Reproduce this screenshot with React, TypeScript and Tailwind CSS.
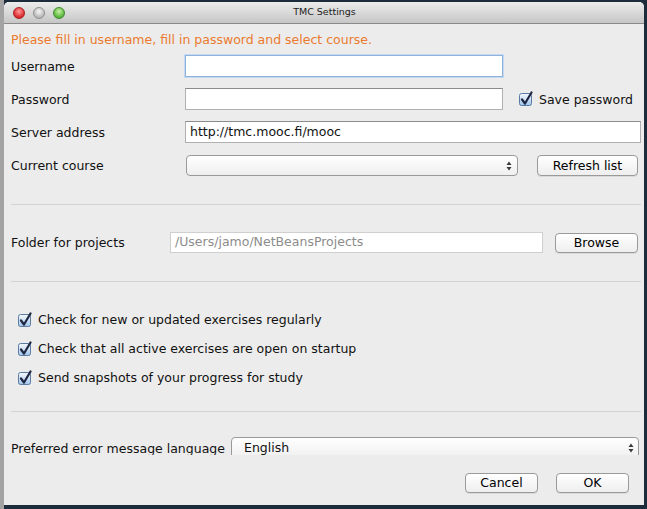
import React from "react";

function AquaCheck() {
  return (
    <svg width="16" height="16" viewBox="0 0 16 16" className="shrink-0">
      <defs>
        <linearGradient id="cbg" x1="0" y1="0" x2="0" y2="1">
          <stop offset="0" stopColor="#f4f8fd" />
          <stop offset="0.5" stopColor="#cfe1f5" />
          <stop offset="1" stopColor="#9fc3ea" />
        </linearGradient>
      </defs>
      <rect x="1.5" y="2.5" width="12" height="12" rx="2" fill="url(#cbg)" stroke="#5b7ba3" />
      <path d="M4 8.5 L7 12.5 L13.5 1.5" fill="none" stroke="#1d2742" strokeWidth="2.2" strokeLinecap="round" strokeLinejoin="round" />
    </svg>
  );
}

function UpDown() {
  return (
    <svg width="6" height="10" viewBox="0 0 6 10" className="shrink-0">
      <path d="M3 0.5 L5.5 4 L0.5 4 Z" fill="#3a3a3a" />
      <path d="M3 9.5 L5.5 6 L0.5 6 Z" fill="#3a3a3a" />
    </svg>
  );
}

function MacButton({ label, className }: { label: string; className: string }) {
  return (
    <div
      className={
        "flex items-center justify-center rounded-[4px] border border-[#9a9a9a] bg-gradient-to-b from-white to-[#eeeeee] text-black shadow-[0_1px_0_rgba(0,0,0,0.08)] " +
        className
      }
    >
      {label}
    </div>
  );
}

function CheckRow({ text }: { text: string }) {
  return (
    <div className="flex items-center h-[16px]">
      <div className="ml-[6px] mr-[5px]">
        <AquaCheck />
      </div>
      <span className="mt-[1px]">{text}</span>
    </div>
  );
}

function Separator({ className }: { className: string }) {
  return <div className={"h-px w-[630px] bg-[#d3d3d3] " + className} />;
}

export default function App() {
  return (
    <div className="w-[647px] h-[509px] bg-[#1d2c3b] flex overflow-hidden font-['DejaVu_Sans',sans-serif] text-[12.5px] text-[#111]">
      <div className="w-[4px] bg-[#a3a3a3]" />
      <div className="w-[640px] h-[503px] mt-[2px] flex flex-col bg-[#ececec] rounded-t-[5px] overflow-hidden">
        {/* title bar */}
        <div className="h-[22px] shrink-0 flex items-center bg-gradient-to-b from-[#ececec] to-[#c6c6c6] border-b border-[#8a8a8a]">
          <div className="flex gap-[8px] ml-[9px]">
            <div className="w-[12px] h-[12px] rounded-full bg-[radial-gradient(circle_at_50%_35%,#ff9a9a,#d9262a_70%)] border border-[#a32020]" />
            <div className="w-[12px] h-[12px] rounded-full bg-[radial-gradient(circle_at_50%_35%,#f6f6f6,#b8b8b8_70%)] border border-[#8f8f8f]" />
            <div className="w-[12px] h-[12px] rounded-full bg-[radial-gradient(circle_at_50%_35%,#c8f3a4,#57b33a_70%)] border border-[#3d8a2a]" />
          </div>
          <div className="flex-1 text-center text-[9.5px] text-[#222] pr-[60px]">TMC Settings</div>
        </div>

        {/* scrollable content (clipped) */}
        <div className="h-[431px] shrink-0 overflow-hidden pl-[7px]">
          <div className="mt-[8px] h-[16px] leading-[16px] text-[#eb7a2e]">
            Please fill in username, fill in password and select course.
          </div>

          <div className="mt-[7px] flex items-center h-[22px]">
            <span className="w-[174px] mt-[2px]">Username</span>
            <div className="w-[318px] h-[22px] bg-white border border-[#8fb2dc] shadow-[0_0_0_1px_#c5d9f0]" />
          </div>

          <div className="mt-[11px] flex items-center h-[22px]">
            <span className="w-[174px] mt-[2px]">Password</span>
            <div className="w-[318px] h-[22px] bg-white border border-[#b0b0b0] border-t-[#8c8c8c]" />
            <div className="ml-[15px] mr-[5px]">
              <AquaCheck />
            </div>
            <span className="mt-[2px]">Save password</span>
          </div>

          <div className="mt-[11px] flex items-center h-[22px]">
            <span className="w-[174px] mt-[2px]">Server address</span>
            <div className="w-[456px] h-[22px] bg-white border border-[#b0b0b0] border-t-[#8c8c8c] flex items-center pl-[4px] pt-[1px]">
              http://tmc.mooc.fi/mooc
            </div>
          </div>

          <div className="mt-[12px] flex items-center h-[21px]">
            <span className="w-[175px] mt-[2px]">Current course</span>
            <div className="w-[332px] h-[21px] rounded-[4px] border border-[#9a9a9a] bg-gradient-to-b from-white to-[#efefef] flex items-center justify-end pr-[5px]">
              <UpDown />
            </div>
            <MacButton label="Refresh list" className="ml-[19px] w-[101px] h-[21px] pt-[1px]" />
          </div>

          <Separator className="mt-[28px]" />

          <div className="mt-[27px] flex items-center h-[21px]">
            <span className="w-[159px] mt-[2px]">Folder for projects</span>
            <div className="w-[373px] h-[21px] bg-white border border-[#cfcfcf] flex items-center pl-[4px] text-[#8c8c8c]">
              /Users/jamo/NetBeansProjects
            </div>
            <MacButton label="Browse" className="ml-[12px] w-[83px] h-[20px] pt-[1px]" />
          </div>

          <Separator className="mt-[28px]" />

          <div className="mt-[30px] flex flex-col gap-[13px]">
            <CheckRow text="Check for new or updated exercises regularly" />
            <CheckRow text="Check that all active exercises are open on startup" />
            <CheckRow text="Send snapshots of your progress for study" />
          </div>

          <Separator className="mt-[25px]" />

          <div className="mt-[25px] flex items-start h-[30px]">
            <span className="w-[220px] mt-[3px]">Preferred error message language</span>
            <div className="w-[408px] h-[22px] rounded-[4px] border border-[#9a9a9a] bg-gradient-to-b from-white to-[#efefef] flex items-center pl-[12px] pr-[4px]">
              <span className="flex-1 mt-[1px]">English</span>
              <UpDown />
            </div>
          </div>
        </div>

        {/* bottom buttons */}
        <div className="flex justify-end gap-[18px] pr-[15px] mt-[18px]">
          <MacButton label="Cancel" className="w-[73px] h-[20px] pt-[1px]" />
          <MacButton label="OK" className="w-[73px] h-[20px] pt-[1px]" />
        </div>
      </div>
    </div>
  );
}
